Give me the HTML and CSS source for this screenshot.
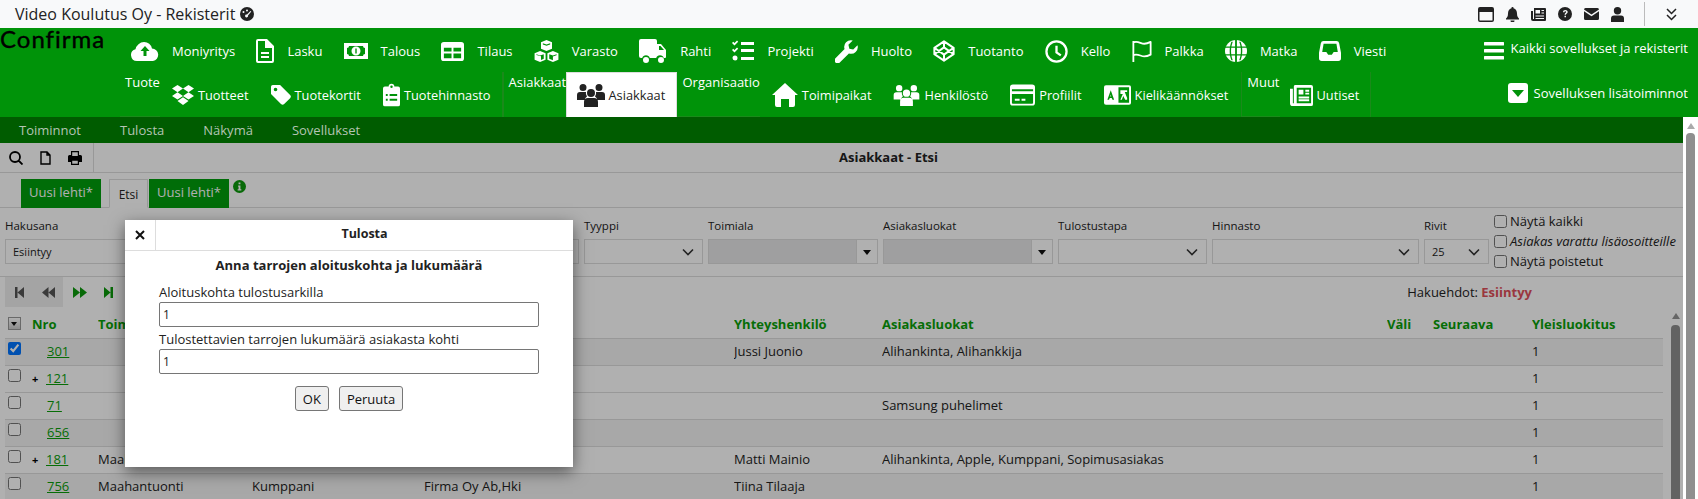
FILE: index.html
```html
<!DOCTYPE html>
<html lang="fi">

<head>
    <meta charset="UTF-8">
    <title>Video Koulutus Oy - Rekisterit</title>
    <link rel="stylesheet" href="styles.css">
</head>

<body>
    <svg class="defs" width="0" height="0">
        <symbol id="i-cloud" viewBox="0 0 28 20"><path d="M6 20a6 6 0 0 1-1.500-11.800A9 9 0 0 1 13 1a8 8 0 0 1 8 6.500 6.300 6.300 0 0 1 1 12.500z"/><path class="cut" d="M14 5l4.500 5h-3v5h-3v-5h-3z"/></symbol>
        <symbol id="i-doc" viewBox="0 0 18 24"><path fill-rule="evenodd" d="M2 0h9l7 7v15a2 2 0 0 1-2 2H2a2 2 0 0 1-2-2V2a2 2 0 0 1 2-2zm0 2v20h14V9h-7V2zM5 13h8v2H5zm0 4h8v2H5z"/></symbol>
        <symbol id="i-money" viewBox="0 0 24 18"><path fill-rule="evenodd" d="M0 1h24v16H0zm5 3a2 2 0 0 1-2 2v6a2 2 0 0 1 2 2h14a2 2 0 0 1 2-2V6a2 2 0 0 1-2-2zm7 0.500a4.500 4.500 0 1 1 0 9 4.500 4.500 0 0 1 0-9z"/><path class="cut" d="M11.300 6.500h1.400v5h-1.400z"/></symbol>
        <symbol id="i-table" viewBox="0 0 24 20"><path fill-rule="evenodd" d="M3 0h18a3 3 0 0 1 3 3v14a3 3 0 0 1-3 3H3a3 3 0 0 1-3-3V3a3 3 0 0 1 3-3zm0 6v4h8V6zm10 0v4h8V6zM3 12v5h8v-5zm10 0v5h8v-5z"/></symbol>
        <symbol id="i-cubes" viewBox="0 0 26 24"><path d="M13 0l6 2.500v7L13 12 7 9.500v-7zM6 12l6 2.500v7L6 24 0 21.500v-7zM20 12l6 2.500v7L20 24l-6-2.500v-7z"/><path class="cut" d="M9 3.500l4 1.500 4-1.500v1.300l-4 1.500-4-1.500zM2 15.500l4 1.500 4-1.500v5l-3 1.300v-4l-5-1.500zM16 15.500l4 1.500 4-1.500v1l-4 1.500v4l-4-1.500z"/></symbol>
        <symbol id="i-truck" viewBox="0 0 28 24"><path fill-rule="evenodd" d="M2 0h14a2 2 0 0 1 2 2v3h4l5 6v7a1 1 0 0 1-1 1h-1.200a4 4 0 0 0-7.600 0h-6.400a4 4 0 0 0-7.600 0H2a2 2 0 0 1-2-2V2a2 2 0 0 1 2-2zm18 7v4h5l-3.500-4zM7 18a3 3 0 1 1 0 6 3 3 0 0 1 0-6zm15 0a3 3 0 1 1 0 6 3 3 0 0 1 0-6z"/></symbol>
        <symbol id="i-tasks" viewBox="0 0 22 22"><path d="M0 3l1.200-1.200L2.500 3 5 .5 6.200 1.700 2.500 5.500zM0 10l1.200-1.200L2.500 10 5 7.500l1.200 1.200-3.700 3.800zM3 15.500a2.500 2.500 0 1 1 0 5 2.500 2.500 0 0 1 0-5zM9 2h13v3H9zM9 9h13v3H9zM9 17h13v3H9z"/></symbol>
        <symbol id="i-wrench" viewBox="0 0 24 24"><path d="M23.500 5.500a7 7 0 0 1-9 8.500L5 23.500a2.300 2.300 0 0 1-4.500-4.500L10 9.500A7 7 0 0 1 18.500.500L14 5l1 4 4 1z"/></symbol>
        <symbol id="i-codepen" viewBox="0 0 24 24"><path fill="none" stroke="#fff" stroke-width="2.200" stroke-linejoin="round" d="M12 1.500L22.500 8.500v7L12 22.500 1.500 15.500v-7zM12 1.500v6.500M12 16v6.500M1.500 8.500L12 16l10.500-7.500M1.500 15.500L12 8l10.500 7.500"/></symbol>
        <symbol id="i-clock" viewBox="0 0 24 24"><path fill="none" stroke="#fff" stroke-width="2.400" d="M12 1.500a10.500 10.500 0 1 1 0 21 10.500 10.500 0 0 1 0-21zM12 6v7l4.500 3"/></symbol>
        <symbol id="i-flag" viewBox="0 0 22 24"><path fill="none" stroke="#fff" stroke-width="2" stroke-linejoin="round" d="M1.500 1v23M1.500 2.500c5-2 8 1.500 12 1.500 3 0 5-1 7-2v14c-2 1-4 2-7 2-4 0-7-3.500-12-1.500"/></symbol>
        <symbol id="i-globe" viewBox="0 0 24 24"><path d="M12 0a12 12 0 1 1 0 24 12 12 0 0 1 0-24z"/><path class="cut" d="M11 0h2v24h-2zM0 7h24v1.500H0zM0 15.500h24V17H0zM7 2h1.500c-2.500 6-2.500 14 0 20H7c-2.500-6-2.500-14 0-20zM15.500 2H17c2.500 6 2.500 14 0 20h-1.500c2.500-6 2.500-14 0-20z"/></symbol>
        <symbol id="i-inbox" viewBox="0 0 24 22"><path fill-rule="evenodd" d="M5 0h14a3 3 0 0 1 3 2.500L24 13v6a3 3 0 0 1-3 3H3a3 3 0 0 1-3-3v-6L2 2.500A3 3 0 0 1 5 0zm0 3L3.500 12H8l2 3h4l2-3h4.500L19 3z"/></symbol>
        <symbol id="i-bars" viewBox="0 0 20 18"><path d="M1 0h18a1.500 1.500 0 0 1 0 3.500H1A1.500 1.500 0 0 1 1 0zM1 7h18a1.500 1.500 0 0 1 0 3.500H1A1.500 1.500 0 0 1 1 7zM1 14h18a1.500 1.500 0 0 1 0 3.500H1A1.500 1.500 0 0 1 1 14z"/></symbol>
        <symbol id="i-dropbox" viewBox="0 0 24 22"><path d="M6 0l6 4-6 4-6-4zM18 0l6 4-6 4-6-4zM6 8l6 4-6 4-6-4zM18 8l6 4-6 4-6-4zM12 13.500l6 4-6 4.500-6-4.500z"/></symbol>
        <symbol id="i-tag" viewBox="0 0 22 22"><path fill-rule="evenodd" d="M2 0h8l11 11a2.500 2.500 0 0 1 0 3.500L14.500 21a2.500 2.500 0 0 1-3.500 0L0 10V2a2 2 0 0 1 2-2zm3 3a2 2 0 1 0 0 4 2 2 0 0 0 0-4z"/></symbol>
        <symbol id="i-clip" viewBox="0 0 18 24"><path fill-rule="evenodd" d="M6 3a3 3 0 0 1 6 0h4a2 2 0 0 1 2 2v17a2 2 0 0 1-2 2H2a2 2 0 0 1-2-2V5a2 2 0 0 1 2-2zm3-1a1.300 1.300 0 1 0 0 2.600A1.300 1.300 0 0 0 9 2zM3 11v2h2v-2zm4 0v2h8v-2zm-4 5v2h2v-2zm4 0v2h8v-2z"/></symbol>
        <symbol id="i-users" viewBox="0 0 28 24"><path d="M6 1a3.500 3.500 0 1 1 0 7 3.500 3.500 0 0 1 0-7zM22 1a3.500 3.500 0 1 1 0 7 3.500 3.500 0 0 1 0-7zM14 6a4 4 0 1 1 0 8 4 4 0 0 1 0-8zM3 9h6a5 5 0 0 0 1 4.500A6 6 0 0 0 7.500 17H0v-5a3 3 0 0 1 3-3zM19 9h6a3 3 0 0 1 3 3v5h-7.500a6 6 0 0 0-2.500-3.500A5 5 0 0 0 19 9zM11 15h6a4 4 0 0 1 4 4v5H7v-5a4 4 0 0 1 4-4z"/></symbol>
        <symbol id="i-home" viewBox="0 0 26 24"><path d="M13 0l13 12h-3v10a2 2 0 0 1-2 2h-4v-8H9v8H5a2 2 0 0 1-2-2V12H0z"/></symbol>
        <symbol id="i-card" viewBox="0 0 26 22"><path fill-rule="evenodd" d="M3 0h20a3 3 0 0 1 3 3v16a3 3 0 0 1-3 3H3a3 3 0 0 1-3-3V3a3 3 0 0 1 3-3zm-1 5v2h22V5zm0 5v9a1 1 0 0 0 1 1h20a1 1 0 0 0 1-1v-9zm3 5h5v2H5zm7 0h4v2h-4z"/></symbol>
        <symbol id="i-lang" viewBox="0 0 28 20"><path d="M2 0h24a2 2 0 0 1 2 2v16a2 2 0 0 1-2 2H2a2 2 0 0 1-2-2V2a2 2 0 0 1 2-2z"/><path class="cut" d="M15 2h11v16H15zM7 5l3.500 10H8.800L8 13H6l-.8 2H3.500zM6.500 11.500h1L7 9.500z"/><path d="M17 5h7v2h-2.500L24 13v2h-2l-2-4-1.500 4H17l2.500-6H17z"/></symbol>
        <symbol id="i-news" viewBox="0 0 24 22"><path fill-rule="evenodd" d="M5 0h17a2 2 0 0 1 2 2v18a2 2 0 0 1-2 2H3a3 3 0 0 1-3-3V4h3v15h1V2a2 2 0 0 1 1-2zm2 3v16h15V3zm2 2h5v5H9zm7 0h4v2h-4zm0 3h4v2h-4zm-7 4h11v2H9zm0 3h11v2H9z"/></symbol>
        <symbol id="i-caret-box" viewBox="0 0 20 20"><path d="M3 0h14a3 3 0 0 1 3 3v14a3 3 0 0 1-3 3H3a3 3 0 0 1-3-3V3a3 3 0 0 1 3-3z"/><path class="cut" d="M4 7h12l-6 7z"/></symbol>
        <symbol id="i-chev" viewBox="0 0 12 8"><path fill="none" stroke="currentColor" stroke-width="1.600" d="M1 1.500l5 5 5-5"/></symbol>
    </svg>

    <div class="titlebar">
        <span class="app-title">Video Koulutus Oy - Rekisterit</span>
        <svg class="gauge" viewBox="0 0 14 14"><circle cx="7" cy="7" r="7"/><path fill="#f8f9fa" d="M7 2.500a1 1 0 1 1 0 2 1 1 0 0 1 0-2zM3.500 4a1 1 0 1 1 0 2 1 1 0 0 1 0-2zM10.500 4l.8.6L8 8.500a1.500 1.500 0 1 1-1-1z"/></svg>
        <div class="title-icons">
            <svg width="16" height="15" viewBox="0 0 16 15"><path fill-rule="evenodd" d="M2 0h12a2 2 0 0 1 2 2v11a2 2 0 0 1-2 2H2a2 2 0 0 1-2-2V2a2 2 0 0 1 2-2zm-.5 5v8a.5.5 0 0 0 .5.5h12a.5.5 0 0 0 .5-.5V5z"/></svg>
            <svg width="13" height="15" viewBox="0 0 13 15"><path d="M6.500 0a1 1 0 0 1 1 1.200C10 1.800 11 4 11 6.500c0 3 1 4 2 5v1H0v-1c1-1 2-2 2-5C2 4 3 1.800 5.500 1.200a1 1 0 0 1 1-1.200zM4.500 13.500h4a2 2 0 0 1-4 0z"/></svg>
            <svg width="15" height="13" viewBox="0 0 15 13"><path fill-rule="evenodd" d="M3 0h11a1 1 0 0 1 1 1v11a1 1 0 0 1-1 1H2a2 2 0 0 1-2-2V3h2v8h1zm1.500 2v3.500H9V2zm6 0v1H13V2zm0 2.500v1H13v-1zm-6 3v1H13v-1zm0 2.500v1H13v-1z"/></svg>
            <svg width="14" height="14" viewBox="0 0 14 14"><path fill-rule="evenodd" d="M7 0a7 7 0 1 1 0 14A7 7 0 0 1 7 0zM5 5.200h1.400C6.500 4.500 7 4.300 7.300 4.300c.5 0 .9.300.9.800 0 .9-1.600 1-1.600 2.700h1.300c0-1.200 1.800-1.400 1.800-2.900C9.700 3.800 8.600 3 7.300 3 6 3 5.100 3.900 5 5.200zM6.500 8.800v1.500H8V8.800z"/></svg>
            <svg width="15" height="12" viewBox="0 0 15 12"><path d="M1.500 0h12A1.500 1.500 0 0 1 15 1.500L7.500 6.500 0 1.500A1.500 1.500 0 0 1 1.500 0zM0 3.300l7.500 5 7.500-5v7.200a1.500 1.500 0 0 1-1.500 1.500h-12A1.500 1.500 0 0 1 0 10.500z"/></svg>
            <svg width="13" height="15" viewBox="0 0 13 15"><path d="M6.500 0a3.700 3.700 0 1 1 0 7.400A3.700 3.700 0 0 1 6.500 0zM3 8.500h7a3 3 0 0 1 3 3V15H0v-3.500a3 3 0 0 1 3-3z"/></svg>
            <span class="title-sep"></span>
            <svg class="dbl-chev" width="11" height="13" viewBox="0 0 11 13"><path fill="none" stroke="#222" stroke-width="1.500" d="M1 1l4.500 4.500L10 1M1 7l4.500 4.500L10 7"/></svg>
        </div>
    </div>

    <div class="nav">
        <div class="logo">Confirma</div>
        <div class="nav-rows">
            <div class="nav-top">
                <a class="app"><svg class="w28"><use href="#i-cloud"/></svg>Moniyritys</a>
                <a class="app"><svg class="w18"><use href="#i-doc"/></svg>Lasku</a>
                <a class="app"><svg class="w24"><use href="#i-money"/></svg>Talous</a>
                <a class="app"><svg class="w23"><use href="#i-table"/></svg>Tilaus</a>
                <a class="app"><svg class="w25"><use href="#i-cubes"/></svg>Varasto</a>
                <a class="app"><svg class="w28"><use href="#i-truck"/></svg>Rahti</a>
                <a class="app"><svg class="w22"><use href="#i-tasks"/></svg>Projekti</a>
                <a class="app"><svg class="w23"><use href="#i-wrench"/></svg>Huolto</a>
                <a class="app"><svg class="w22"><use href="#i-codepen"/></svg>Tuotanto</a>
                <a class="app"><svg class="w23"><use href="#i-clock"/></svg>Kello</a>
                <a class="app"><svg class="w20"><use href="#i-flag"/></svg>Palkka</a>
                <a class="app"><svg class="w22"><use href="#i-globe"/></svg>Matka</a>
                <a class="app"><svg class="w22"><use href="#i-inbox"/></svg>Viesti</a>
                <a class="all-apps"><svg class="bars"><use href="#i-bars"/></svg>Kaikki sovellukset ja rekisterit</a>
            </div>
            <div class="nav-sub">
                <div class="group">
                    <span class="group-label">Tuote</span>
                    <a class="sub first"><svg class="w22"><use href="#i-dropbox"/></svg>Tuotteet</a>
                    <a class="sub"><svg class="w20"><use href="#i-tag"/></svg>Tuotekortit</a>
                    <a class="sub"><svg class="w17"><use href="#i-clip"/></svg>Tuotehinnasto</a>
                </div>
                <div class="group no-right">
                    <span class="group-label asiakkaat-label">Asiakkaat</span>
                    <a class="sub active"><svg class="w28"><use href="#i-users"/></svg>Asiakkaat</a>
                </div>
                <div class="group org-group">
                    <span class="group-label org-label">Organisaatio</span>
                    <a class="sub first"><svg class="w26"><use href="#i-home"/></svg>Toimipaikat</a>
                    <a class="sub"><svg class="w27"><use href="#i-users"/></svg>Henkilöstö</a>
                    <a class="sub"><svg class="w25"><use href="#i-card"/></svg>Profiilit</a>
                    <a class="sub"><svg class="w27"><use href="#i-lang"/></svg>Kielikäännökset</a>
                </div>
                <div class="group muut-group">
                    <span class="group-label">Muut</span>
                    <a class="sub first"><svg class="w23"><use href="#i-news"/></svg>Uutiset</a>
                </div>
                <a class="more"><svg class="w20 tall"><use href="#i-caret-box"/></svg>Sovelluksen lisätoiminnot</a>
            </div>
        </div>
    </div>

    <div class="lower">
        <div class="main">
            <div class="menubar">
                <span>Toiminnot</span>
                <span>Tulosta</span>
                <span>Näkymä</span>
                <span>Sovellukset</span>
            </div>

            <div class="toolbar">
                <div class="tools">
                    <svg width="14" height="14" viewBox="0 0 14 14"><path fill="none" stroke="#000" stroke-width="1.800" d="M6 1a5 5 0 1 1 0 10A5 5 0 0 1 6 1zM9.500 9.500L13.500 13.500"/></svg>
                    <svg width="11" height="14" viewBox="0 0 11 14"><path fill="none" stroke="#000" stroke-width="1.400" d="M1 1h6l3 3v9H1zM7 1v3h3"/></svg>
                    <svg width="14" height="14" viewBox="0 0 14 14"><path fill-rule="evenodd" d="M3 0h8v4h1.500A1.500 1.500 0 0 1 14 5.500V11h-3v3H3v-3H0V5.500A1.500 1.500 0 0 1 1.500 4H3zm1.200 1.200V5h5.600V1.200zm0 8.600v3h5.600v-3z"/></svg>
                </div>
                <div class="toolbar-title">Asiakkaat - Etsi</div>
            </div>

            <div class="tabs">
                <span class="tab new">Uusi lehti*</span>
                <span class="tab current">Etsi</span>
                <span class="tab new">Uusi lehti*</span>
                <svg class="info" viewBox="0 0 14 14"><circle cx="7" cy="7" r="7"/><path fill="#fff" d="M6 2.800h2v1.800H6zM5.500 6h2.500v4h1v1.200H5V10h1V7.200h-.5z"/></svg>
            </div>

            <div class="filters">
                <div class="field f-search"><label>Hakusana</label><div class="input">Esiintyy</div></div>
                <div class="field f-type"><label>Tyyppi</label><div class="input sel"><svg class="chev"><use href="#i-chev"/></svg></div></div>
                <div class="field f-multi"><label>Toimiala</label><div class="input multi"><span class="multi-btn"><i></i></span></div></div>
                <div class="field f-multi"><label>Asiakasluokat</label><div class="input multi"><span class="multi-btn"><i></i></span></div></div>
                <div class="field f-print"><label>Tulostustapa</label><div class="input sel"><svg class="chev"><use href="#i-chev"/></svg></div></div>
                <div class="field f-price"><label>Hinnasto</label><div class="input sel"><svg class="chev"><use href="#i-chev"/></svg></div></div>
                <div class="field f-rows"><label>Rivit</label><div class="input sel"><span>25</span><svg class="chev"><use href="#i-chev"/></svg></div></div>
                <div class="checks">
                    <label><input type="checkbox">Näytä kaikki</label>
                    <label class="reserved"><input type="checkbox"><em>Asiakas varattu lisäosoitteille</em></label>
                    <label><input type="checkbox">Näytä poistetut</label>
                </div>
            </div>

            <div class="pager-row">
                <div class="pager-back">
                    <svg width="9" height="11" viewBox="0 0 9 11"><path fill="#555" d="M0 0h2.500v11H0zM9 0v11L2.500 5.500z"/></svg>
                    <svg width="13" height="11" viewBox="0 0 13 11"><path fill="#555" d="M6.500 0v11L0 5.500zM13 0v11L6.500 5.500z"/></svg>
                </div>
                <svg class="pager-next" width="14" height="11" viewBox="0 0 14 11"><path fill="#0c9a0c" d="M0 0l7 5.500L0 11zM7 0l7 5.500L7 11z"/></svg>
                <svg class="pager-last" width="9" height="11" viewBox="0 0 9 11"><path fill="#0c9a0c" d="M0 0l6.500 5.500L0 11zM6.500 0H9v11H6.500z"/></svg>
                <div class="criteria">Hakuehdot: <b>Esiintyy</b></div>
            </div>

            <div class="grid-wrap">
                <table class="grid">
                    <colgroup>
                        <col class="c-check"><col class="c-no"><col class="c-branch"><col class="c-type"><col class="c-name">
                        <col class="c-contact"><col class="c-class"><col class="c-gap"><col class="c-next"><col class="c-rank">
                    </colgroup>
                    <thead>
                        <tr>
                            <th><span class="sort-box"></span></th><th>Nro</th><th>Toimiala</th><th>Tyyppi</th><th>Nimi</th>
                            <th>Yhteyshenkilö</th><th>Asiakasluokat</th><th>Väli</th><th>Seuraava</th><th>Yleisluokitus</th>
                        </tr>
                    </thead>
                    <tbody>
                        <tr class="dark"><td><input type="checkbox" checked></td><td><a class="indent">301</a></td><td></td><td></td><td></td><td>Jussi Juonio</td><td>Alihankinta, Alihankkija</td><td></td><td></td><td>1</td></tr>
                        <tr><td><input type="checkbox"></td><td><b class="plus">+</b><a>121</a></td><td></td><td></td><td></td><td></td><td></td><td></td><td></td><td>1</td></tr>
                        <tr><td><input type="checkbox"></td><td><a class="indent">71</a></td><td></td><td></td><td></td><td></td><td>Samsung puhelimet</td><td></td><td></td><td>1</td></tr>
                        <tr class="dark"><td><input type="checkbox"></td><td><a class="indent">656</a></td><td></td><td></td><td></td><td></td><td></td><td></td><td></td><td>1</td></tr>
                        <tr><td><input type="checkbox"></td><td><b class="plus">+</b><a>181</a></td><td>Maahantuonti</td><td></td><td></td><td>Matti Mainio</td><td>Alihankinta, Apple, Kumppani, Sopimusasiakas</td><td></td><td></td><td>1</td></tr>
                        <tr class="dark"><td><input type="checkbox"></td><td><a class="indent">756</a></td><td>Maahantuonti</td><td>Kumppani</td><td>Firma Oy Ab,Hki</td><td>Tiina Tilaaja</td><td></td><td></td><td></td><td>1</td></tr>
                    </tbody>
                </table>
                <div class="grid-scroll"><span class="arrow-up"></span><span class="thumb"></span></div>
            </div>

            <div class="dim"></div>

            <div class="dialog">
                <div class="dialog-head">
                    <span class="dialog-close">
                        <svg width="10" height="10" viewBox="0 0 10 10"><path fill="none" stroke="#111" stroke-width="2" d="M1 1l8 8M9 1l-8 8"/></svg>
                    </span>
                    <span class="dialog-title">Tulosta</span>
                </div>
                <div class="dialog-body">
                    <h4>Anna tarrojen aloituskohta ja lukumäärä</h4>
                    <label for="startPos">Aloituskohta tulostusarkilla</label>
                    <input id="startPos" type="text" value="1">
                    <label for="labelCount">Tulostettavien tarrojen lukumäärä asiakasta kohti</label>
                    <input id="labelCount" type="text" value="1">
                    <div class="dialog-buttons">
                        <button>OK</button>
                        <button>Peruuta</button>
                    </div>
                </div>
            </div>
        </div>

        <div class="page-scroll"><span class="arrow-up"></span><span class="thumb"></span></div>
    </div>
</body>

</html>
```

FILE: styles.css
```css
* {
    box-sizing: border-box;
}

html,
body {
    margin: 0;
    height: 499px;
    overflow: hidden;
}

body {
    font-family: "Open Sans", Arial, sans-serif;
    font-size: 13px;
    color: #222;
    background-color: #fff;
}

.defs {
    position: absolute;
}

.cut {
    fill: #009309;
}

/* title bar */
.titlebar {
    height: 28px;
    display: flex;
    align-items: center;
    padding-left: 15px;
    background-color: #f8f9fa;
}

.app-title {
    font-size: 16px;
    line-height: 28px;
}

.gauge {
    width: 14px;
    height: 14px;
    margin-left: 5px;
    fill: #222;
}

.title-icons {
    margin-left: auto;
    display: flex;
    align-items: center;
    gap: 12px;
    padding-right: 21px;
    fill: #222;
}

.title-sep {
    width: 1px;
    height: 24px;
    margin: 0 9px 0 8px;
    background-color: #bbb;
}

/* green navigation */
.nav {
    height: 89px;
    display: flex;
    background-color: #009309;
    color: #fff;
    fill: #fff;
}

.logo {
    width: 120px;
    flex: none;
    font-family: Lato, sans-serif;
    font-size: 24px;
    line-height: 22px;
    color: #000;
    letter-spacing: 1px;
    -webkit-text-stroke: 0.4px #000;
}

.nav-rows {
    flex: 1;
    min-width: 0;
}

.nav-top {
    height: 44px;
    display: flex;
    align-items: center;
    padding-left: 11px;
    padding-top: 2px;
}

.app {
    display: flex;
    align-items: center;
    gap: 13px;
    margin-right: 21.200px;
}

.all-apps,
.more {
    margin-left: auto;
    display: flex;
    align-items: center;
    padding-right: 10px;
}

.all-apps {
    gap: 7px;
    height: 30px;
    margin-top: -6px;
}

.bars {
    width: 20px;
    height: 18px;
    margin-top: 6px;
}

.more {
    gap: 6px;
    margin-top: -3px;
}

.nav-sub {
    height: 45px;
    display: flex;
    align-items: stretch;
}

.group {
    display: flex;
    align-items: stretch;
    border-right: 1px solid #1a8a1a;
}

.no-right {
    border-right: none;
}

.org-group {
    padding-right: 2px;
}

.group-label {
    padding: 1px 0 0 5px;
    line-height: 18px;
    border-bottom: 1px solid #1a8a1a;
}

.sub {
    display: flex;
    align-items: center;
    gap: 4px;
    padding: 0 11px;
    padding-top: 1px;
    font-size: 12.800px;
}

.sub.first {
    padding-left: 12px;
}

.muut-group .sub.first {
    padding-left: 10px;
}

.asiakkaat-label {
    width: 63px;
    overflow: hidden;
    border-bottom: none;
    border-left: 1px solid #1a8a1a;
}

.sub.active {
    width: 111px;
    padding: 0 0 0 10px;
    background-color: #fff;
    color: #222;
    fill: #222;
    border: 1px solid #ddd;
    border-bottom: none;
}

.org-label {
    padding-left: 6px;
}

.w17 { width: 17px; height: 24px; }
.w18 { width: 18px; height: 24px; }
.w20 { width: 20px; height: 24px; }
.w22 { width: 22px; height: 22px; }
.w23 { width: 23px; height: 23px; }
.w24 { width: 24px; height: 18px; }
.w25 { width: 25px; height: 22px; }
.w26 { width: 26px; height: 24px; }
.w27 { width: 27px; height: 22px; }
.w28 { width: 28px; height: 24px; }
.tall { height: 20px; }

/* body below the nav */
.lower {
    display: flex;
    height: 382px;
}

.main {
    position: relative;
    flex: 1;
    min-width: 0;
    overflow: hidden;
}

.menubar {
    height: 26px;
    display: flex;
    align-items: center;
    position: relative;
    z-index: 3;
    padding-left: 19px;
    gap: 39px;
    background-color: #005c00;
    color: #b4c4b4;
}

.toolbar {
    height: 30px;
    display: flex;
    border-bottom: 1px solid #ddd;
}

.tools {
    width: 94px;
    padding-left: 9px;
    display: flex;
    align-items: center;
    gap: 17px;
    border-right: 1px solid #ddd;
}

.toolbar-title {
    flex: 1;
    text-align: center;
    font-size: 13px;
    font-weight: 700;
    line-height: 29px;
}

.tabs {
    height: 35px;
    padding: 6px 0 0 21px;
    display: flex;
    align-items: flex-start;
    border-bottom: 1px solid #ddd;
}

.tab {
    height: 29px;
    line-height: 27px;
}

.tab.new {
    width: 80px;
    text-align: center;
    background-color: #009e0c;
    color: #fff;
}

.tab.current {
    width: 39px;
    margin: 0 1px 0 8px;
    text-align: center;
    background-color: #fff;
    border: 1px solid #ddd;
    border-bottom-color: #fff;
    font-size: 12px;
    line-height: 29px;
}

.info {
    width: 13px;
    height: 13px;
    margin: 1px 0 0 4px;
    fill: #0c9a0c;
}

/* search filters */
.filters {
    height: 69px;
    padding: 9px 0 0 5px;
    display: flex;
    gap: 5px;
    border-bottom: 1px solid #ddd;
}

.field label {
    display: block;
    height: 22px;
    font-size: 11.500px;
    line-height: 17px;
}

.input {
    height: 25px;
    padding-left: 7px;
    display: flex;
    align-items: center;
    border: 1px solid #ddd;
    font-size: 11px;
}

.sel {
    justify-content: space-between;
    padding-right: 8px;
}

.sel .chev {
    margin-left: auto;
}

.chev {
    width: 12px;
    height: 8px;
    color: #333;
}

.multi {
    padding: 0;
    justify-content: flex-end;
    background-color: #e6e7e8;
}

.multi-btn {
    width: 21px;
    height: 100%;
    display: flex;
    align-items: center;
    justify-content: center;
    background-color: #fff;
    border-left: 1px solid #ddd;
}

.multi-btn i {
    border: 4px solid transparent;
    border-top: 5px solid #111;
    border-bottom: 0;
    margin-top: 2px;
}

.f-search { width: 574px; }
.f-type { width: 119px; }
.f-multi { width: 170px; }
.f-print { width: 149px; }
.f-price { width: 207px; }
.f-rows { width: 65px; }

.checks {
    margin-top: -6px;
    display: flex;
    flex-direction: column;
}

.checks label {
    height: 20px;
    display: flex;
    align-items: center;
    gap: 3px;
    white-space: nowrap;
}

.checks em {
    font-size: 13px;
}

input[type="checkbox"] {
    width: 13px;
    height: 13px;
    margin: 0;
}

/* pager */
.pager-row {
    height: 30px;
    display: flex;
    align-items: center;
    margin: 0 0 5px 5px;
}

.pager-back {
    width: 58px;
    height: 30px;
    padding-left: 10px;
    display: flex;
    align-items: center;
    gap: 18px;
    background-color: #eee;
    flex: none;
}

.pager-next {
    margin-left: 10px;
}

.pager-last {
    margin-left: 17px;
}

.criteria {
    margin-left: auto;
    margin-right: 151px;
    white-space: nowrap;
}

.criteria b {
    color: #e0505a;
}

/* results table */
.grid-wrap {
    display: flex;
    padding-left: 5px;
}

.grid {
    width: 1658px;
    flex: none;
    table-layout: fixed;
    border-collapse: collapse;
}

.c-check { width: 27px; }
.c-no { width: 66px; }
.c-branch { width: 154px; }
.c-type { width: 172px; }
.c-name { width: 310px; }
.c-contact { width: 148px; }
.c-class { width: 505px; }
.c-gap { width: 46px; }
.c-next { width: 99px; }
.c-rank { width: 131px; }

.grid th,
.grid td {
    padding: 0 0 2px;
    text-align: left;
    white-space: nowrap;
    overflow: hidden;
}

.grid th {
    height: 26px;
    color: #0a9f0a;
    font-weight: 700;
    border-bottom: 1px solid #ddd;
}

.grid td {
    height: 27px;
    border-bottom: 1px solid #ddd;
}

.grid td:first-child input {
    margin: 0 0 4px 3px;
    display: block;
}

.grid a {
    color: #0a9f0a;
    text-decoration: underline;
}

.grid a.indent {
    margin-left: 15px;
}

.plus {
    display: inline-block;
    width: 14px;
    color: #000;
    font-size: 11px;
}

.dark td {
    background-color: #f3f3f3;
}

.sort-box {
    display: block;
    width: 13px;
    height: 13px;
    margin-left: 3px;
    background: linear-gradient(#fff 0, #ccc 100%);
    border: 1px solid #999;
    position: relative;
}

.sort-box::after {
    content: "";
    position: absolute;
    left: 2px;
    top: 4px;
    border: 3.500px solid transparent;
    border-top: 4px solid #111;
    border-bottom: 0;
}

.grid-scroll {
    margin-left: 8px;
    width: 9px;
    display: flex;
    flex-direction: column;
    align-items: center;
}

.arrow-up {
    width: 0;
    height: 0;
    border: 4.500px solid transparent;
    border-bottom: 6px solid #949494;
    border-top: 0;
}

.grid-scroll .arrow-up {
    margin-top: 1px;
}

.grid-scroll .thumb {
    width: 9px;
    flex: 1;
    margin-top: 6px;
    border-radius: 4px 4px 0 0;
    background-color: #8f8f8f;
}

/* dialog on top of the dimmed page */
.dim {
    position: absolute;
    left: 0;
    right: 0;
    top: 26px;
    bottom: 0;
    z-index: 1;
    background-color: rgba(0, 0, 0, 0.31);
}

.dialog {
    position: absolute;
    left: 125px;
    top: 103px;
    width: 448px;
    height: 247px;
    z-index: 2;
    background-color: #fff;
    box-shadow: 0 5px 15px rgba(0, 0, 0, 0.5);
}

.dialog-head {
    height: 31px;
    display: flex;
    border-bottom: 1px solid #ddd;
}

.dialog-close {
    width: 31px;
    display: flex;
    align-items: center;
    justify-content: center;
    border-right: 1px solid #ddd;
}

.dialog-title {
    flex: 1;
    text-align: center;
    font-size: 12.500px;
    font-weight: 700;
    line-height: 27px;
}

.dialog-body {
    padding: 0 34px;
}

.dialog-body h4 {
    margin: 6px 0 0;
    height: 27px;
    text-align: center;
    font-size: 13px;
    font-weight: 700;
    line-height: 17px;
}

.dialog-body label {
    display: block;
    height: 18px;
    line-height: 16px;
}

.dialog-body input {
    display: block;
    width: 380px;
    height: 25px;
    margin: 0 0 4px;
    padding: 0 3px;
    border: 1px solid #767676;
    border-radius: 2px;
    font-family: inherit;
    font-size: 12px;
    color: #222;
}

.dialog-buttons {
    margin-top: 12px;
    display: flex;
    justify-content: center;
    gap: 10px;
}

.dialog-buttons button {
    height: 25px;
    padding: 0 7px;
    background-color: #efefef;
    border: 1px solid #767676;
    border-radius: 3px;
    font-family: inherit;
    font-size: 13px;
    color: #111;
}

/* page scrollbar */
.page-scroll {
    width: 15px;
    flex: none;
    display: flex;
    flex-direction: column;
    align-items: center;
    padding-top: 6px;
    background-color: #fff;
}

.page-scroll .arrow-up {
    border-bottom-color: #aaa;
}

.page-scroll .thumb {
    width: 9px;
    flex: 1;
    margin-top: 4px;
    border-radius: 4px 4px 0 0;
    background-color: #8f8f8f;
}
```
